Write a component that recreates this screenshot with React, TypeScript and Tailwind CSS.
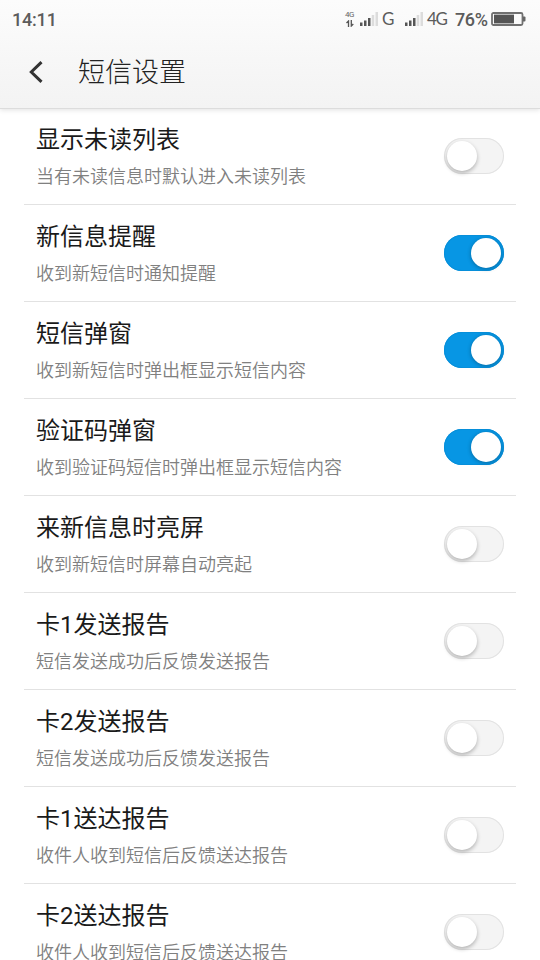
import clsx from 'clsx';
import { useState } from 'react';

interface Setting {
  title: string;
  summary: string;
  enabled: boolean;
}

const SETTINGS: Setting[] = [
  { title: '显示未读列表', summary: '当有未读信息时默认进入未读列表', enabled: false },
  { title: '新信息提醒', summary: '收到新短信时通知提醒', enabled: true },
  { title: '短信弹窗', summary: '收到新短信时弹出框显示短信内容', enabled: true },
  { title: '验证码弹窗', summary: '收到验证码短信时弹出框显示短信内容', enabled: true },
  { title: '来新信息时亮屏', summary: '收到新短信时屏幕自动亮起', enabled: false },
  { title: '卡1发送报告', summary: '短信发送成功后反馈发送报告', enabled: false },
  { title: '卡2发送报告', summary: '短信发送成功后反馈发送报告', enabled: false },
  { title: '卡1送达报告', summary: '收件人收到短信后反馈送达报告', enabled: false },
  { title: '卡2送达报告', summary: '收件人收到短信后反馈送达报告', enabled: false },
];

const Signal = () => (
  <svg width="18" height="15" viewBox="0 0 18 15" className="shrink-0">
    <path d="M0 10.5h2.5V14H0zM4 8.5h2.5V14H4zM8 6h2.5v8H8z" fill="#555" />
    <path d="M11.7 3h2.5v11h-2.5zM15.5 0H18v14h-2.5z" fill="#dcdcdc" />
  </svg>
);

const DataIndicator = () => (
  <div className="w-[11px] shrink-0">
    <div className="text-[8px] leading-[8px] tracking-[-0.4px] text-[#666]">4G</div>
    <svg width="8" height="7" viewBox="0 0 8 7" className="mt-px ml-px">
      <path d="M2.5 7V1L.5 3M5.3 0v6l2-2" fill="none" stroke="#555" strokeWidth="1.3" />
    </svg>
  </div>
);

const Battery = () => (
  <svg width="35" height="14" viewBox="0 0 35 14" className="shrink-0">
    <rect x="1" y="1" width="30.5" height="12" rx="1.5" fill="none" stroke="#707070" strokeWidth="1.8" />
    <path d="M3 2.6h20v8.8H3z" fill="#555" />
    <path d="M32 4.5h1.5q1 0 1 1v3q0 1-1 1H32z" fill="#666" />
  </svg>
);

const StatusBar = () => (
  <div className="flex h-[38px] items-center font-['Roboto',sans-serif] text-[18px] leading-[22px] text-[#5c5c5c]">
    <span className="ml-3 pt-0.5 font-medium tracking-[-0.2px]">14:11</span>
    <div className="ml-auto flex w-[195px] items-center">
      <DataIndicator />
      <div className="ml-1">
        <Signal />
      </div>
      <span className="ml-1 w-[23px] font-['Lato',sans-serif] text-[17px]">G</span>
      <Signal />
      <span className="ml-1 w-7 font-['Lato',sans-serif] text-[17px] tracking-[-1.3px]">4G</span>
      <span className="w-9 pt-0.5 font-medium tracking-[-0.4px]">76%</span>
      <Battery />
    </div>
  </div>
);

interface ToggleProps {
  checked: boolean;
  onClick: () => void;
}

const Toggle = ({ checked, onClick }: ToggleProps) => (
  <button
    type="button"
    role="switch"
    aria-checked={checked}
    onClick={onClick}
    className={clsx(
      'flex h-9 w-[60px] shrink-0 items-center rounded-full px-[3px]',
      checked
        ? 'justify-end bg-[#0796e4] shadow-[inset_0_0_0_1px_#078fda]'
        : 'justify-start bg-[#f4f4f4] shadow-[inset_0_0_0_1px_#e2e2e2]'
    )}
  >
    <span
      className={clsx(
        'size-[30px] rounded-full bg-white',
        checked ? 'shadow-[0_1px_4px_rgba(0,0,0,0.3)]' : 'shadow-[0_2px_4px_rgba(0,0,0,0.28)]'
      )}
    />
  </button>
);

const App = () => {
  const [settings, setSettings] = useState(SETTINGS);

  const toggle = (index: number) =>
    setSettings((list) => list.map((s, i) => (i === index ? { ...s, enabled: !s.enabled } : s)));

  return (
    <div className="flex h-[960px] w-[540px] flex-col overflow-hidden bg-white font-['Noto_Sans_CJK_SC',sans-serif]">
      <header className="h-[108px] shrink-0 bg-linear-to-b from-[#fcfcfc] to-[#f3f3f3] shadow-[0_1px_0_#dcdcdc,0_2px_5px_rgba(0,0,0,0.12)]">
        <StatusBar />
        <div className="flex h-[66px] items-center">
          <svg width="15" height="22" viewBox="0 0 15 22" className="mt-px ml-[29px]">
            <path d="M12.5 1.2 2.3 11l10.2 9.8" fill="none" stroke="#333" strokeWidth="3" />
          </svg>
          <h1 className="ml-[34px] text-[27px] leading-10 font-light text-[#222]">短信设置</h1>
        </div>
      </header>

      <main>
        {settings.map((s, i) => (
          <div key={s.title} className="mx-6 flex h-[97px] items-center border-b border-[#e2e2e2] px-3">
            <div className="flex-1 pb-0.5">
              <div className="pt-[3px] font-['Roboto','Noto_Sans_CJK_SC',sans-serif] text-[24px] leading-9 text-[#1a1a1a]">{s.title}</div>
              <div className="mt-px text-[18px] leading-8 font-[350] text-[#808080]">{s.summary}</div>
            </div>
            <Toggle checked={s.enabled} onClick={() => toggle(i)} />
          </div>
        ))}
      </main>
    </div>
  );
};

export default App;
